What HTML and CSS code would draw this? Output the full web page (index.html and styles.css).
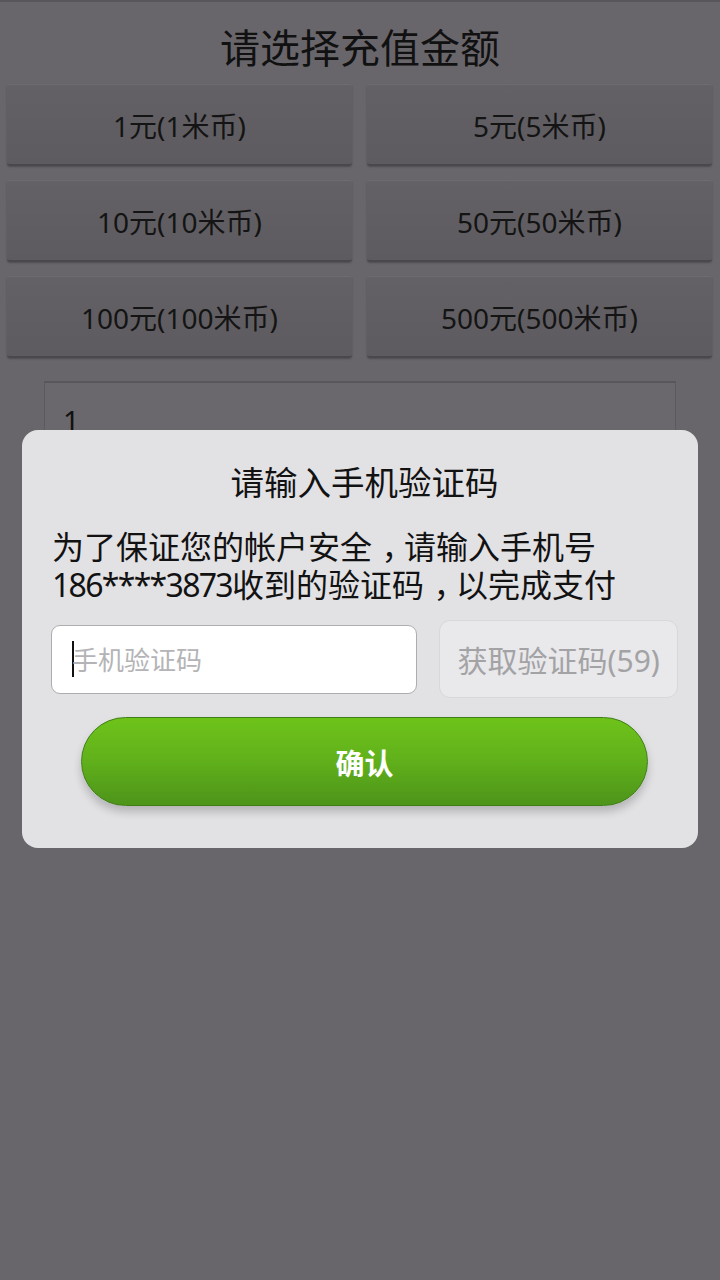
FILE: index.html
```html
<!DOCTYPE html>
<html lang="zh-CN">
<head>
  <meta charset="UTF-8">
  <title>充值</title>
  <link rel="stylesheet" href="styles.css">
</head>
<body>

  <div class="page">
    <h1 class="page-title">请选择充值金额</h1>

    <div class="amounts">
      <button class="amount">1元(1米币)</button>
      <button class="amount">5元(5米币)</button>
      <button class="amount">10元(10米币)</button>
      <button class="amount">50元(50米币)</button>
      <button class="amount">100元(100米币)</button>
      <button class="amount">500元(500米币)</button>
    </div>

    <div class="amount-input">1</div>
  </div>

  <div class="dialog">
    <h2 class="dialog-title">请输入手机验证码</h2>
    <p class="dialog-msg">为了保证您的帐户安全<span class="punct">，</span>请输入手机号<br><span class="phone">186****3873</span>收到的验证码<span class="punct">，</span>以完成支付</p>

    <div class="code-row">
      <div class="code-input">
        <span class="caret"></span>
        <span class="placeholder">手机验证码</span>
      </div>
      <button class="get-code">获取验证码(59)</button>
    </div>

    <button class="confirm">确认</button>
  </div>

</body>
</html>
```

FILE: styles.css
```css
body {
  margin: 0;
  width: 720px;
  height: 1280px;
  background: #69666b;
  font-family: "Noto Sans", "Noto Sans CJK SC", sans-serif;
  color: #111;
  position: relative;
  overflow: hidden;
}

.page {
  border-top: 2px solid #58565a;
}

.page-title {
  margin: 0;
  height: 82px;
  line-height: 92px;
  font-size: 40px;
  font-weight: normal;
  text-align: center;
}

.amounts {
  display: grid;
  grid-template-columns: 1fr 1fr;
  gap: 14px 15px;
  padding: 0 8px 0 7px;
}

.amount {
  height: 82px;
  border: none;
  border-radius: 3px;
  background: linear-gradient(to bottom, #636165, #5d5b5f);
  border-top: 1px solid #6e6c70;
  border-bottom: 2px solid #4a484c;
  box-shadow: 0 1px 2px rgba(0, 0, 0, 0.25);
  font-family: inherit;
  font-size: 28px;
  color: #141414;
  padding: 0;
}

.amount-input {
  margin: 23px 44px 0 44px;
  height: 80px;
  border: 1px solid #5c5a5e;
  border-top: 2px solid #59575b;
  background: #6b686d;
  padding: 18px 18px 0;
  box-sizing: border-box;
  font-size: 29px;
}

.dialog {
  position: absolute;
  top: 430px;
  left: 22px;
  width: 676px;
  height: 418px;
  box-sizing: border-box;
  background: #e2e1e4;
  border-radius: 16px;
  padding: 30px 20px 0 29px;
}

.dialog-title {
  margin: 0;
  font-size: 33.5px;
  line-height: 44px;
  font-weight: normal;
  text-align: center;
  color: #121212;
}

.dialog-msg {
  margin: 24px 0 0 1px;
  font-size: 32px;
  line-height: 38px;
  color: #121212;
  white-space: nowrap;
}

.punct {
  display: inline-block;
  width: 1em;
  text-indent: 0.3em;
}

.phone {
  letter-spacing: -1.7px;
}

.code-row {
  display: flex;
  align-items: center;
  gap: 22px;
  margin-top: 16px;
  height: 78px;
}

.code-input {
  width: 367px;
  height: 69px;
  box-sizing: border-box;
  background: #fff;
  border: 1px solid #adadb0;
  border-radius: 9px;
  display: flex;
  align-items: center;
  padding-left: 20px;
}

.caret {
  width: 2px;
  height: 36px;
  background: #111;
  margin-right: -2px;
}

.placeholder {
  font-size: 26px;
  color: #b4b4b6;
}

.get-code {
  width: 239px;
  height: 78px;
  border: 1px solid #d8d7db;
  border-radius: 11px;
  background: #e9e8eb;
  font-family: inherit;
  font-size: 30px;
  color: #a3a3a5;
  padding: 0;
}

.confirm {
  display: block;
  margin: 19px 0 0 30px;
  width: 567px;
  height: 89px;
  border: 1px solid #3f7f18;
  border-radius: 45px;
  background: linear-gradient(to bottom, #6ec31a 0%, #62b21b 45%, #4d941a 100%);
  box-shadow: 0 6px 8px rgba(0, 0, 0, 0.2);
  font-family: inherit;
  font-size: 29px;
  font-weight: bold;
  color: #fff;
}
```
